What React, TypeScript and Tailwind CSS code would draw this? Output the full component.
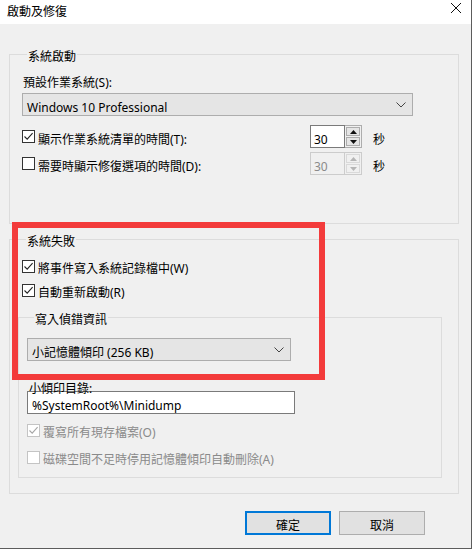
import clsx from "clsx";

const font = { fontFamily: '"Noto Sans", "Noto Sans CJK TC", sans-serif' };
const label = "block pt-[6px] leading-[10px]";

function CheckBox({ checked, disabled }: { checked?: boolean; disabled?: boolean }) {
  return (
    <span
      className={clsx(
        "flex h-[13px] w-[13px] shrink-0 items-center justify-center border bg-white",
        disabled ? "border-[#c4c4c4]" : "border-[#333333]"
      )}
    >
      {checked && (
        <svg width="11" height="11" viewBox="0 0 11 11">
          <path
            d="M1.5 5.5 L4.2 8.2 L9.6 2.2"
            fill="none"
            stroke={disabled ? "#a6a6a6" : "#222"}
            strokeWidth="1.1"
          />
        </svg>
      )}
    </span>
  );
}

function Chevron() {
  return (
    <svg width="10" height="6" viewBox="0 0 10 6">
      <polyline points="0.5,0.5 5,5 9.5,0.5" fill="none" stroke="#444" strokeWidth="1" />
    </svg>
  );
}

function Arrow({ up, disabled }: { up?: boolean; disabled?: boolean }) {
  return (
    <svg width="7" height="4" viewBox="0 0 7 4">
      <polygon
        points={up ? "0,4 3.5,0 7,4" : "0,0 3.5,4 7,0"}
        fill={disabled ? "#b5b5b5" : "#111"}
      />
    </svg>
  );
}

function Spinner({ disabled }: { disabled?: boolean }) {
  return (
    <div className="flex h-[23px] w-[52px]">
      <div
        className={clsx(
          "flex w-[35px] items-center border pl-[3px]",
          disabled ? "border-[#cccccc] bg-[#f0f0f0] text-[#8a8a8a]" : "border-[#7a7a7a] bg-white text-black"
        )}
      >
        <span className={label}>30</span>
      </div>
      <div
        className={clsx(
          "flex w-[17px] flex-col gap-[1px] border border-l-0 p-[1px]",
          disabled ? "border-[#cccccc]" : "border-[#adadad]"
        )}
      >
        {[true, false].map((up) => (
          <div
            key={String(up)}
            className={clsx(
              "flex flex-1 items-center justify-center border",
              disabled ? "border-[#d9d9d9] bg-[#f0f0f0]" : "border-[#adadad] bg-[#e5e5e5]"
            )}
          >
            <Arrow up={up} disabled={disabled} />
          </div>
        ))}
      </div>
    </div>
  );
}

function Combo({ text, width }: { text: string; width: string }) {
  return (
    <div
      className={clsx(
        "flex h-[23px] items-center justify-between border border-[#adadad] bg-[#e5e5e5] pl-[4px] pr-[6px]",
        width
      )}
    >
      <span className={label}>{text}</span>
      <Chevron />
    </div>
  );
}

function Option({ text, checked, disabled }: { text: string; checked?: boolean; disabled?: boolean }) {
  return (
    <div className={clsx("flex h-[16px] items-center gap-[3px]", disabled && "text-[#8a8a8a]")}>
      <CheckBox checked={checked} disabled={disabled} />
      <span className={label}>{text}</span>
    </div>
  );
}

export default function App() {
  return (
    <div className="h-[550px] w-[474px] bg-white text-[12px] text-black" style={font}>
      <div className="relative h-[549px] w-[472px] border-r border-b border-[#5c5c5c]">
        {/* title bar */}
        <div className="flex h-[24px] items-start justify-between bg-white pt-[3px] pl-[7px] pr-[10px]">
          <span className="pt-[2px] leading-[14px]">啟動及修復</span>
          <svg width="10" height="10" viewBox="0 0 10 10">
            <path d="M0 0 L10 10 M10 0 L0 10" stroke="#111" strokeWidth="1" />
          </svg>
        </div>

        <div className="h-[524px] bg-[#f0f0f0] pl-[9px] pt-[22px]">
          {/* 系統啟動 */}
          <fieldset className="w-[450px] border border-[#dcdcdc] pb-[48px] pl-[12px]">
            <legend className="ml-[5px] px-[1px] pt-[6px] leading-[10px]">系統啟動</legend>
            <div className={clsx(label, "ml-[1px] mt-[10px] h-[16px]")}>預設作業系統(S):</div>
            <div className="mt-[5px]">
              <Combo text="Windows 10 Professional" width="w-[391px]" />
            </div>
            <div className="mt-[9px] flex h-[23px] items-center">
              <div className="w-[288px]">
                <Option text="顯示作業系統清單的時間(T):" checked />
              </div>
              <Spinner />
              <span className={clsx(label, "ml-[11px]")}>秒</span>
            </div>
            <div className="mt-[4px] flex h-[23px] items-center">
              <div className="w-[288px]">
                <Option text="需要時顯示修復選項的時間(D):" />
              </div>
              <Spinner disabled />
              <span className={clsx(label, "ml-[11px]")}>秒</span>
            </div>
          </fieldset>

          {/* 系統失敗 */}
          <fieldset className="mt-[7px] w-[450px] border border-[#dcdcdc] pb-[15px] pl-[8px]">
            <legend className="ml-[8px] px-[1px] pt-[6px] leading-[10px]">系統失敗</legend>
            <div className="ml-[4px] mt-[11px]">
              <Option text="將事件寫入系統記錄檔中(W)" checked />
            </div>
            <div className="ml-[4px] mt-[8px]">
              <Option text="自動重新啟動(R)" checked />
            </div>

            <fieldset className="mt-[11px] w-[424px] border border-[#dcdcdc] pb-[12px] pl-[8px]">
              <legend className="ml-[7px] px-[1px] pt-[6px] leading-[10px]">寫入偵錯資訊</legend>
              <div className="mt-[13px]">
                <Combo text="小記憶體傾印 (256 KB)" width="w-[264px]" />
              </div>
              <div className="ml-[2px] mt-[19px] h-[11px] pt-[6px] leading-[5px]">小傾印目錄:</div>
              <div className="flex h-[23px] w-[268px] items-center border border-[#7a7a7a] bg-white pl-[4px]">
                <span className={label}>%SystemRoot%\Minidump</span>
              </div>
              <div className="mt-[8px]">
                <Option text="覆寫所有現存檔案(O)" checked disabled />
              </div>
              <div className="mt-[11px]">
                <Option text="磁碟空間不足時停用記憶體傾印自動刪除(A)" disabled />
              </div>
            </fieldset>
          </fieldset>

          {/* buttons */}
          <div className="ml-[236px] mt-[17px] flex gap-[8px]">
            <button className="flex h-[24px] w-[86px] items-center justify-center border-2 border-[#0078d7] bg-[#e1e1e1]">
              <span className={label}>確定</span>
            </button>
            <button className="flex h-[24px] w-[86px] items-center justify-center border border-[#adadad] bg-[#e1e1e1]">
              <span className={label}>取消</span>
            </button>
          </div>
        </div>

        {/* red highlight drawn over the dialog */}
        <div className="pointer-events-none absolute left-[12px] top-[222px] h-[158px] w-[313px] border-[6px] border-[#f33b3b]" />
      </div>
    </div>
  );
}
